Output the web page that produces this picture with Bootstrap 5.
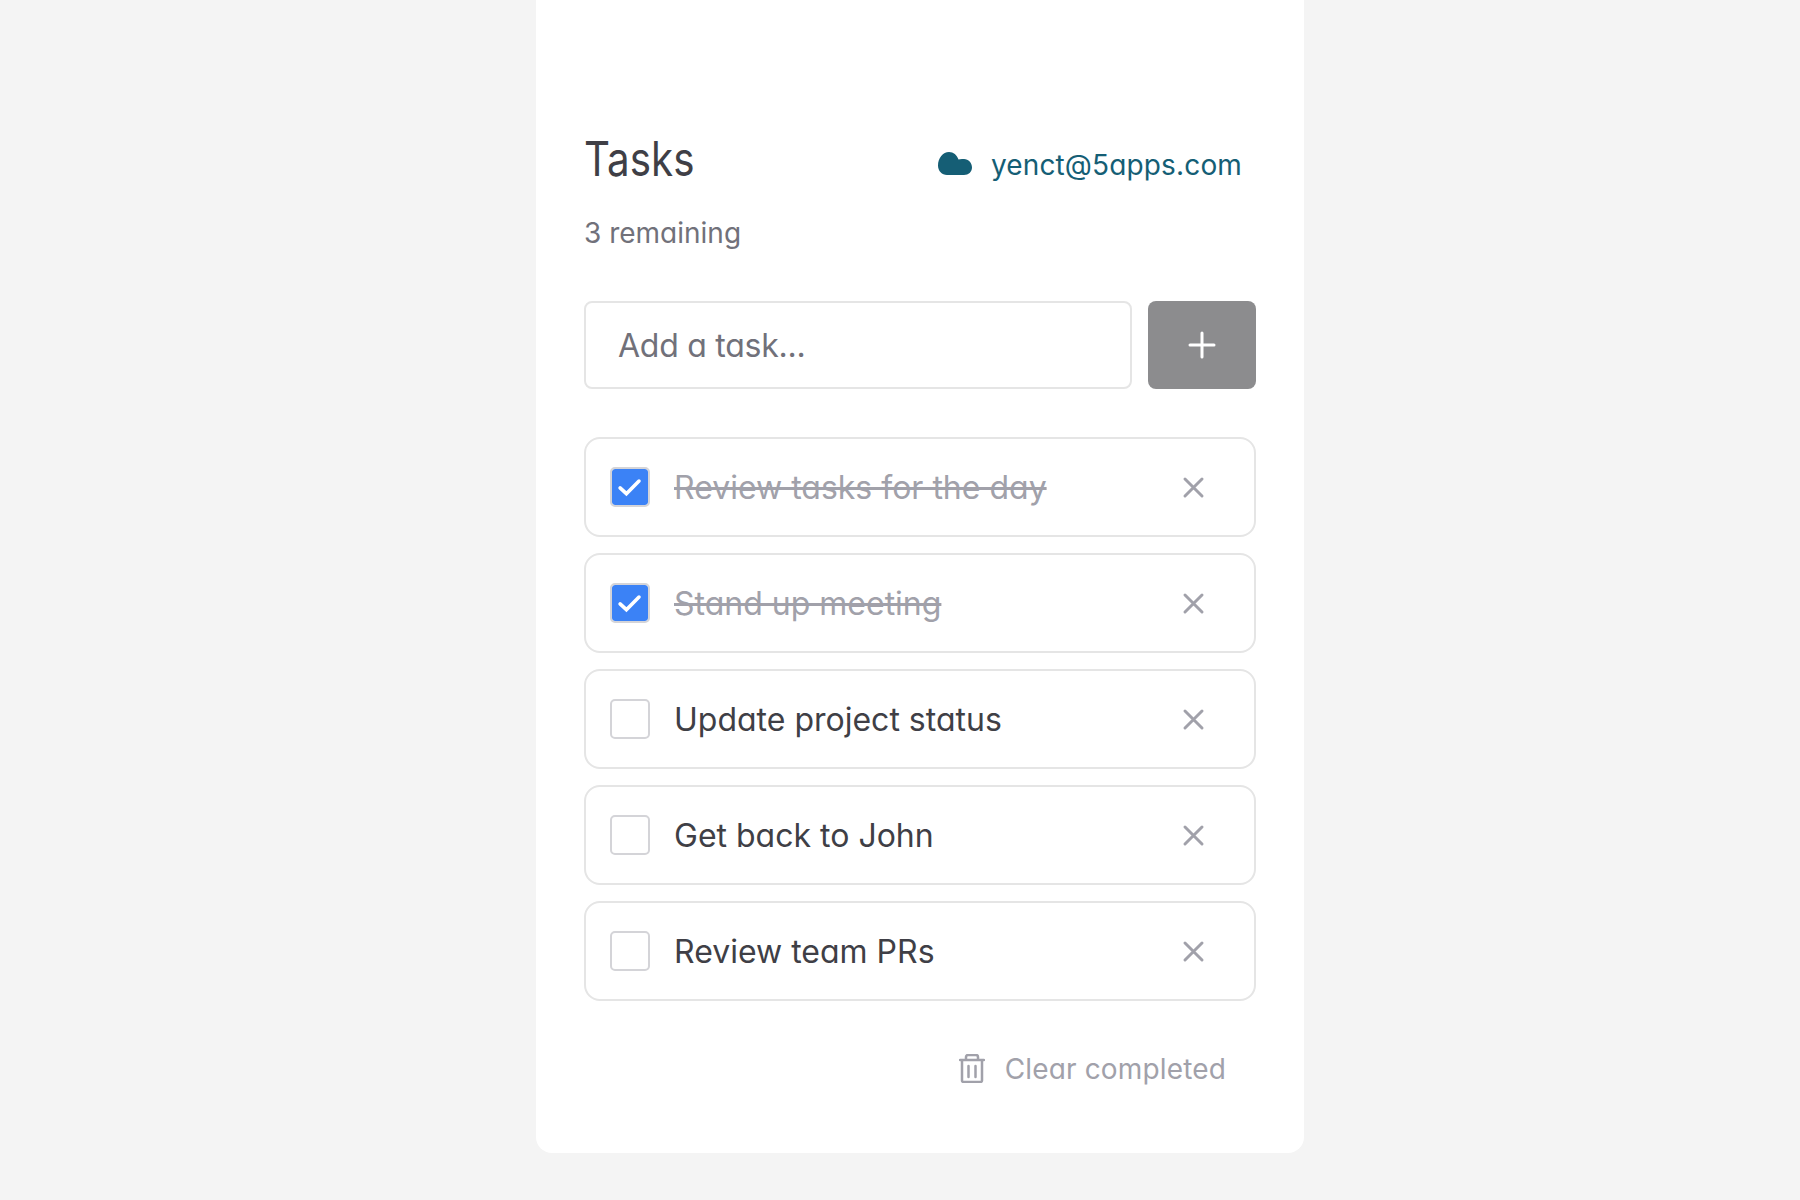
<!DOCTYPE html>
<html lang="en">
<head>
  <meta charset="UTF-8">
  <title>Tasks</title>
  <link href="https://cdn.jsdelivr.net/npm/bootstrap@5.3.0/dist/css/bootstrap.min.css" rel="stylesheet">
  <style>
    body {
      background-color: #f4f4f4;
      padding-left: 40px;
    }
    .tasks-card, .tasks-card * {
      font-family: Inter, "Liberation Sans", sans-serif;
      font-feature-settings: 'cv11';
    }
    .tasks-card {
      width: 768px;
      padding: 131px 48px 48px;
      border-radius: 0 0 16px 16px;
    }
    .tasks-card .tasks-title {
      font-size: 48px;
      line-height: 56px;
      font-weight: 400;
      font-feature-settings: normal;
      color: #3f3f46;
      transform: scaleX(.84);
      transform-origin: left center;
    }
    .account-link {
      font-size: 28px;
      line-height: 40px;
      letter-spacing: .15px;
      color: #155e75;
      padding: 11px 14px 0 16px;
      gap: 19px;
    }
    .account-link svg {
      margin-bottom: 3px;
    }
    .remaining {
      font-size: 28px;
      line-height: 40px;
      margin-top: 26px;
      color: #71717a;
    }
    .add-input {
      height: 88px;
      font-size: 32px;
      letter-spacing: -.25px;
      padding: 0 32px;
      border: 2px solid #e5e5e5;
      border-radius: 8px;
      color: #3f3f46;
    }
    .add-input::placeholder {
      color: #71717a;
    }
    .add-btn {
      width: 108px;
      height: 88px;
      background-color: #8c8c8e;
      border: 0;
      border-radius: 8px;
    }
    .task-row {
      height: 100px;
      padding: 0 24px;
      border: 2px solid #e5e5e5;
      border-radius: 16px;
    }
    .task-check.form-check-input {
      width: 40px;
      height: 40px;
      margin: 0 24px 0 0;
      flex: none;
      border: 2px solid #d4d4d8;
      border-radius: 5px;
      background-clip: padding-box;
    }
    .task-check.form-check-input:checked {
      background-color: #3b82f6;
      background-image: url("data:image/svg+xml,%3csvg xmlns='http://www.w3.org/2000/svg' viewBox='0 0 20 20'%3e%3cpath fill='none' stroke='%23fff' stroke-linecap='round' stroke-width='2' d='m4.500 10.500 3.500 3.200 7-7'/%3e%3c/svg%3e");
    }
    .task-text {
      font-size: 32px;
      line-height: 48px;
      padding-top: 2px;
      color: #3f3f46;
    }
    .task-text.done {
      color: #a1a1aa;
    }
    .clear-btn {
      font-size: 28px;
      line-height: 40px;
      letter-spacing: .15px;
      color: #a1a1aa;
      padding: 16px 30px 16px 32px;
      gap: 20px;
    }
    .clear-btn svg {
      margin-bottom: 2px;
    }
  </style>
</head>
<body>
  <div class="tasks-card bg-white mx-auto">
    <div class="d-flex justify-content-between align-items-center">
      <h1 class="tasks-title m-0">Tasks</h1>
      <a class="account-link d-flex align-items-center text-decoration-none" href="#">
        <svg width="34" height="23" viewBox="0 0 34 23"><path fill="#155e75" d="M9 23C4 23 0 19 0 13.500 0 6 5 0 11 0c4.500 0 8 3 9.500 7.500C21.500 7.200 22.500 7 24 7h2c4.500 0 8 4 8 8.500S30.500 23 26 23Z"/></svg>
        yenct@5apps.com
      </a>
    </div>
    <p class="remaining mb-5">3 remaining</p>

    <form class="d-flex gap-3 mb-5">
      <input class="add-input form-control" type="text" placeholder="Add a task...">
      <button class="add-btn btn flex-shrink-0 d-flex align-items-center justify-content-center" type="button" aria-label="Add">
        <svg width="28" height="28" viewBox="0 0 28 28"><path stroke="#fff" stroke-width="3" stroke-linecap="round" d="M14 2v24M2 14h24"/></svg>
      </button>
    </form>

    <div class="d-flex flex-column gap-3">
      <div class="task-row d-flex align-items-center">
        <input class="task-check form-check-input" type="checkbox" checked>
        <span class="task-text done text-decoration-line-through flex-grow-1">Review tasks for the day</span>
        <button class="btn p-3 border-0 d-flex" type="button" aria-label="Remove">
          <svg width="40" height="40" viewBox="0 0 40 40"><path stroke="#a1a1aa" stroke-width="3" stroke-linecap="round" d="M11 12l17 17M28 12 11 29"/></svg>
        </button>
      </div>
      <div class="task-row d-flex align-items-center">
        <input class="task-check form-check-input" type="checkbox" checked>
        <span class="task-text done text-decoration-line-through flex-grow-1">Stand up meeting</span>
        <button class="btn p-3 border-0 d-flex" type="button" aria-label="Remove">
          <svg width="40" height="40" viewBox="0 0 40 40"><path stroke="#a1a1aa" stroke-width="3" stroke-linecap="round" d="M11 12l17 17M28 12 11 29"/></svg>
        </button>
      </div>
      <div class="task-row d-flex align-items-center">
        <input class="task-check form-check-input" type="checkbox">
        <span class="task-text flex-grow-1">Update project status</span>
        <button class="btn p-3 border-0 d-flex" type="button" aria-label="Remove">
          <svg width="40" height="40" viewBox="0 0 40 40"><path stroke="#a1a1aa" stroke-width="3" stroke-linecap="round" d="M11 12l17 17M28 12 11 29"/></svg>
        </button>
      </div>
      <div class="task-row d-flex align-items-center">
        <input class="task-check form-check-input" type="checkbox">
        <span class="task-text flex-grow-1">Get back to John</span>
        <button class="btn p-3 border-0 d-flex" type="button" aria-label="Remove">
          <svg width="40" height="40" viewBox="0 0 40 40"><path stroke="#a1a1aa" stroke-width="3" stroke-linecap="round" d="M11 12l17 17M28 12 11 29"/></svg>
        </button>
      </div>
      <div class="task-row d-flex align-items-center">
        <input class="task-check form-check-input" type="checkbox">
        <span class="task-text flex-grow-1">Review team PRs</span>
        <button class="btn p-3 border-0 d-flex" type="button" aria-label="Remove">
          <svg width="40" height="40" viewBox="0 0 40 40"><path stroke="#a1a1aa" stroke-width="3" stroke-linecap="round" d="M11 12l17 17M28 12 11 29"/></svg>
        </button>
      </div>
    </div>

    <div class="d-flex justify-content-end mt-4 pt-2">
      <button class="clear-btn btn border-0 d-flex align-items-center" type="button">
        <svg width="26" height="29" viewBox="0 0 26 29" fill="none" stroke="#a1a1aa" stroke-width="2.500" stroke-linecap="round" stroke-linejoin="round"><path d="M1 6h24M3 6v20.500a1.500 1.500 0 0 0 1.500 1.500h17a1.500 1.500 0 0 0 1.500-1.500V6M7 6V3a2 2 0 0 1 2-2h8a2 2 0 0 1 2 2v3M9.500 12v11M16.500 12v11"/></svg>
        Clear completed
      </button>
    </div>
  </div>
  <script src="https://cdn.jsdelivr.net/npm/bootstrap@5.3.0/dist/js/bootstrap.bundle.min.js"></script>
</body>
</html>
